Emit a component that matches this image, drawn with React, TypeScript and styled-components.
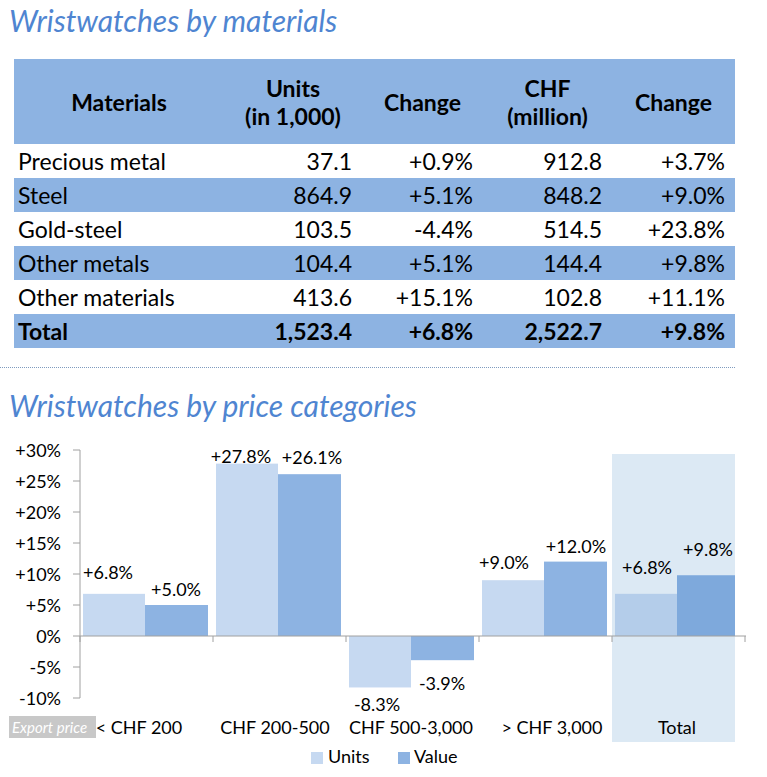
import React from 'react';
import styled, { createGlobalStyle } from 'styled-components';

const GlobalStyle = createGlobalStyle`
  html, body {
    margin: 0;
    padding: 0;
    background: #ffffff;
  }
  body {
    font-family: 'Lato', 'Open Sans', sans-serif;
    color: #000;
  }
`;

const Page = styled.div`
  width: 767px;
  height: 777px;
  overflow: hidden;
  padding-top: 3px;
  box-sizing: border-box;
`;

const SectionTitle = styled.h2`
  margin: 0;
  padding-left: 9px;
  font-size: 30px;
  line-height: 35px;
  font-weight: 400;
  font-style: italic;
  color: #4f85d1;
`;

const Table = styled.div`
  width: 721px;
  margin: 21px 0 0 14px;
`;

const Row = styled.div<{ $shaded?: boolean; $header?: boolean }>`
  display: grid;
  grid-template-columns: 210px 138px 121px 129px 123px;
  height: ${(p) => (p.$header ? '85px' : '34px')};
  background: ${(p) => (p.$shaded || p.$header ? '#8db3e2' : '#ffffff')};
  font-size: 23px;
  font-weight: ${(p) => (p.$header ? 700 : 400)};
`;

const HeadCell = styled.div`
  display: flex;
  flex-direction: column;
  align-items: center;
  justify-content: center;
  line-height: 28px;
  text-align: center;
`;

const Cell = styled.div<{ $first?: boolean; $bold?: boolean }>`
  display: flex;
  align-items: center;
  justify-content: ${(p) => (p.$first ? 'flex-start' : 'flex-end')};
  padding: ${(p) => (p.$first ? '0 0 0 4px' : '0 10px 0 0')};
  font-weight: ${(p) => (p.$bold ? 700 : 400)};
  white-space: nowrap;
`;

const Divider = styled.hr`
  width: 735px;
  margin: 19px 0 20px 0;
  border: none;
  border-top: 1px dotted #7f9bbf;
  height: 0;
`;

const ChartBox = styled.div`
  width: 767px;
  height: 354px;
`;

const Chart = styled.svg`
  display: block;
  font-family: 'Lato', 'Open Sans', sans-serif;
`;

const AxisText = styled.text`
  font-size: 18px;
  fill: #000;
`;

const BadgeText = styled.text`
  font-size: 15px;
  font-style: italic;
  fill: #ffffff;
`;

type Material = { name: string; units: string; uChange: string; chf: string; cChange: string };

const materials: Material[] = [
  { name: 'Precious metal', units: '37.1', uChange: '+0.9%', chf: '912.8', cChange: '+3.7%' },
  { name: 'Steel', units: '864.9', uChange: '+5.1%', chf: '848.2', cChange: '+9.0%' },
  { name: 'Gold-steel', units: '103.5', uChange: '-4.4%', chf: '514.5', cChange: '+23.8%' },
  { name: 'Other metals', units: '104.4', uChange: '+5.1%', chf: '144.4', cChange: '+9.8%' },
  { name: 'Other materials', units: '413.6', uChange: '+15.1%', chf: '102.8', cChange: '+11.1%' },
];

type Category = {
  label: string;
  labelX: number;
  units: number;
  value: number;
  uLabel: [number, number];
  vLabel: [number, number];
  total?: boolean;
};

const categories: Category[] = [
  { label: '< CHF 200', labelX: 139, units: 6.8, value: 5.0, uLabel: [108, 572], vLabel: [176, 589] },
  { label: 'CHF 200-500', labelX: 275, units: 27.8, value: 26.1, uLabel: [241, 456], vLabel: [312, 457] },
  { label: 'CHF 500-3,000', labelX: 411, units: -8.3, value: -3.9, uLabel: [377, 704], vLabel: [442, 683] },
  { label: '> CHF 3,000', labelX: 552, units: 9.0, value: 12.0, uLabel: [504, 562], vLabel: [576, 546] },
  { label: 'Total', labelX: 677, units: 6.8, value: 9.8, uLabel: [647, 567], vLabel: [708, 549], total: true },
];

const ZERO = 636;
const PER = 6.2;
const ticks = [30, 25, 20, 15, 10, 5, 0, -5, -10];

const fmt = (n: number) => (n > 0 ? '+' : '') + n.toFixed(1) + '%';
const tickFmt = (n: number) => (n > 0 ? '+' : '') + n + '%';

function bar(x: number, w: number, v: number, fill: string, key: string) {
  const h = Math.abs(v) * PER;
  const y = v >= 0 ? ZERO - h : ZERO;
  return <rect key={key} x={x} y={y} width={w} height={h} fill={fill} />;
}

const PriceChart: React.FC = () => (
  <ChartBox>
    <Chart width={767} height={354} viewBox="0 423 767 354">
      <rect x={612} y={454} width={123} height={288} fill="#dce9f4" />
      {categories.map((c, i) => {
        const start = 80 + i * 133;
        const uFill = c.total ? '#b4cdea' : '#c6d9f1';
        const vFill = c.total ? '#7ea9dc' : '#8db3e2';
        return (
          <g key={c.label}>
            {bar(start + 3, 62, c.units, uFill, 'u')}
            {bar(start + 65, c.total ? 58 : 63, c.value, vFill, 'v')}
          </g>
        );
      })}
      <line x1={80} y1={450} x2={80} y2={698} stroke="#a0a0a0" strokeWidth={1} />
      {ticks.map((t) => (
        <line key={t} x1={73} y1={ZERO - t * PER} x2={80} y2={ZERO - t * PER} stroke="#a0a0a0" />
      ))}
      <line x1={80} y1={ZERO} x2={746} y2={ZERO} stroke="#a0a0a0" strokeWidth={1} />
      {[80, 213, 346, 479, 612, 745].map((x) => (
        <line key={x} x1={x} y1={ZERO} x2={x} y2={ZERO + 6} stroke="#a0a0a0" />
      ))}
      {ticks.map((t) => (
        <AxisText key={t} x={61} y={ZERO - t * PER + 6.5} textAnchor="end">
          {tickFmt(t)}
        </AxisText>
      ))}
      {categories.map((c) => (
        <g key={c.label + '-labels'}>
          <AxisText x={c.uLabel[0]} y={c.uLabel[1] + 6.5} textAnchor="middle">
            {fmt(c.units)}
          </AxisText>
          <AxisText x={c.vLabel[0]} y={c.vLabel[1] + 6.5} textAnchor="middle">
            {fmt(c.value)}
          </AxisText>
          <AxisText x={c.labelX} y={734} textAnchor="middle">
            {c.label}
          </AxisText>
        </g>
      ))}
      <rect x={9} y={716} width={87} height={22} fill="#c8c8c8" />
      <BadgeText x={12} y={733}>Export price</BadgeText>
      <rect x={311} y={752} width={12} height={12} fill="#c6d9f1" />
      <AxisText x={328} y={763}>Units</AxisText>
      <rect x={398} y={752} width={12} height={12} fill="#8db3e2" />
      <AxisText x={414} y={763}>Value</AxisText>
    </Chart>
  </ChartBox>
);

const App: React.FC = () => (
  <Page>
    <GlobalStyle />
    <SectionTitle>Wristwatches by materials</SectionTitle>
    <Table>
      <Row $header>
        <HeadCell>Materials</HeadCell>
        <HeadCell>
          <span>Units</span>
          <span>(in 1,000)</span>
        </HeadCell>
        <HeadCell>Change</HeadCell>
        <HeadCell>
          <span>CHF</span>
          <span>(million)</span>
        </HeadCell>
        <HeadCell>Change</HeadCell>
      </Row>
      {materials.map((m, i) => (
        <Row key={m.name} $shaded={i % 2 === 1}>
          <Cell $first>{m.name}</Cell>
          <Cell>{m.units}</Cell>
          <Cell>{m.uChange}</Cell>
          <Cell>{m.chf}</Cell>
          <Cell>{m.cChange}</Cell>
        </Row>
      ))}
      <Row $shaded>
        <Cell $first $bold>Total</Cell>
        <Cell $bold>1,523.4</Cell>
        <Cell $bold>+6.8%</Cell>
        <Cell $bold>2,522.7</Cell>
        <Cell $bold>+9.8%</Cell>
      </Row>
    </Table>
    <Divider />
    <SectionTitle>Wristwatches by price categories</SectionTitle>
    <PriceChart />
  </Page>
);

export default App;
